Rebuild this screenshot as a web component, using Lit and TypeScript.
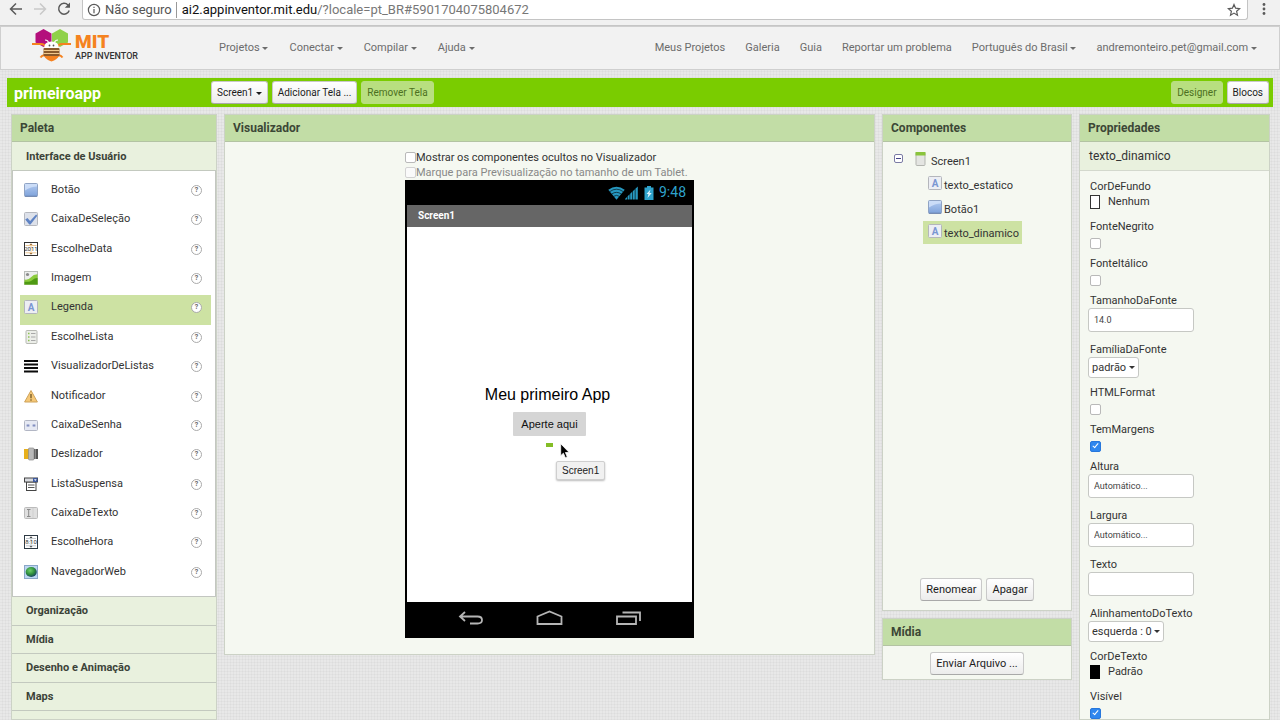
import { LitElement, html, css, TemplateResult } from "lit";
import { customElement, property, state } from "lit/decorators.js";
import { classMap } from "lit/directives/class-map.js";

const icons: Record<string, () => TemplateResult> = {
  button: () => html`<svg class="icon" viewBox="0 0 14 14" aria-hidden="true">
    <defs><linearGradient id="gb" x1="0" y1="0" x2="0" y2="1"><stop offset="0" stop-color="#b4ccf2"/><stop offset="1" stop-color="#7ea2da"/></linearGradient></defs>
    <rect x=".5" y=".5" width="13" height="13" rx="1" fill="url(#gb)" stroke="#8fa3c4"/>
    <path d="M1 1h12v2.500q-6 0-12 4z" fill="#d3e2fa" opacity=".8"/><path d="M1 13.200h12" stroke="#6d85ad"/></svg>`,
  check: () => html`<svg class="icon" viewBox="0 0 14 14" aria-hidden="true">
    <rect x=".5" y=".5" width="13" height="13" rx="1" fill="#dde1ea" stroke="#b5b8bf"/>
    <path d="M1.200 7.600l2.300-1.600 2.600 2.900 6-6.500 1.200 1.300-6.800 8.900h-1.200z" fill="#5f83c4"/></svg>`,
  date: () => html`<svg class="icon" viewBox="0 0 14 14" aria-hidden="true">
    <rect x=".5" y=".5" width="13" height="13" fill="#fff" stroke="#333"/>
    <path d="M1.500 3.500h11M1.500 10.800h11" stroke="#eec996"/><path d="M5.500 3L7 1.300 8.500 3zM5.500 11L7 12.700 8.500 11z" fill="#9a6b35"/>
    <path d="M7 3.500v7.500" stroke="#f3c78e" stroke-width=".8"/>
    <text x="7" y="9.300" text-anchor="middle" font-size="6" font-family="Roboto, sans-serif" fill="#333">2011</text></svg>`,
  image: () => html`<svg class="icon" viewBox="0 0 14 14" aria-hidden="true">
    <rect x=".5" y=".5" width="13" height="13" fill="#eceeed" stroke="#b9bdb9"/>
    <circle cx="3.500" cy="3.500" r="1.600" fill="#8b8b8b"/>
    <path d="M.500 13.500v-5q4 .8 6.500-2.300T13.500 3.200v10.300z" fill="#8ccc3d"/>
    <path d="M.500 13.500v-2.800q6 .3 8-1.800t5-2v6.600z" fill="#4e9a12"/></svg>`,
  label: () => html`<svg class="icon" viewBox="0 0 14 14" aria-hidden="true">
    <rect x=".5" y=".5" width="13" height="13" rx="1" fill="#eceef4" stroke="#b4b6bc"/>
    <text x="7" y="10.800" text-anchor="middle" font-size="10" font-weight="700" font-family="Roboto, sans-serif" fill="#7a96d2">A</text></svg>`,
  list: () => html`<svg class="icon" viewBox="0 0 14 14" aria-hidden="true">
    <rect x="2" y=".5" width="11" height="13" rx="1" fill="#eceee9" stroke="#b7b9b3"/>
    <path d="M4 3.500h1.500M4 7h1.500M4 10.500h1.500" stroke="#8cc152" stroke-width="1.500"/>
    <path d="M7 3.500h4.500M7 7h4.500M7 10.500h4.500" stroke="#a8a8a8"/></svg>`,
  listview: () => html`<svg class="icon" viewBox="0 0 14 14" aria-hidden="true">
    <path d="M0 2h14M0 5.500h14M0 9h14M0 12.500h14" stroke="#0a0a0a" stroke-width="2"/></svg>`,
  warn: () => html`<svg class="icon" viewBox="0 0 14 14" aria-hidden="true">
    <path d="M7 1.500L13.400 13H.6z" fill="#f6c877" stroke="#cda25a" stroke-linejoin="round"/>
    <path d="M7 5v4.200" stroke="#6f5423" stroke-width="1.300"/><circle cx="7" cy="11" r=".8" fill="#6f5423"/></svg>`,
  password: () => html`<svg class="icon" viewBox="0 0 14 14" aria-hidden="true">
    <rect x=".5" y="2.500" width="13" height="10" rx="1" fill="#e6e9f3" stroke="#b2b6c4"/>
    <path d="M2.500 7.500h3M4 6v3M8.500 7.500h3M10 6v3M3 6.500l2 2M5 6.500l-2 2M9 6.500l2 2M11 6.500l-2 2" stroke="#7d8cbe" stroke-width=".8"/></svg>`,
  slider: () => html`<svg class="icon" viewBox="0 0 14 14" aria-hidden="true">
    <path d="M0 2h5v10H0z" fill="#e8b01c"/><path d="M9 2h5v10H9z" fill="#555"/><path d="M11 2h1v10h-1z" fill="#888"/>
    <rect x="4.500" y="1" width="5.500" height="12" rx="1" fill="#b9b9b9" stroke="#8d8d8d" stroke-width=".7"/></svg>`,
  spinner: () => html`<svg class="icon" viewBox="0 0 14 14" aria-hidden="true">
    <rect x="2.500" y="5" width="9.500" height="8.500" fill="#fff" stroke="#444"/>
    <path d="M4 8h6.500M4 10.500h6.500" stroke="#555"/>
    <rect x=".5" y="1" width="13" height="4" fill="#d9dbe0" stroke="#444"/>
    <rect x="9" y="1" width="4.500" height="4" fill="#3f5ba0"/><path d="M10 2.300h2.600L11.300 4z" fill="#fff"/></svg>`,
  textbox: () => html`<svg class="icon" viewBox="0 0 14 14" aria-hidden="true">
    <rect x=".5" y="1.500" width="13" height="11" rx="1" fill="#dfdfdf" stroke="#bbb"/>
    <path d="M3 3.500h3.500M3 10.500h3.500M4.700 3.500v7" stroke="#8a8a8a"/><path d="M9 2v10" stroke="#cfcfcf"/></svg>`,
  time: () => html`<svg class="icon" viewBox="0 0 14 14" aria-hidden="true">
    <rect x=".5" y=".5" width="13" height="13" fill="#fff" stroke="#2e3a44"/>
    <path d="M5.500 3L7 1.300 8.500 3zM5.500 11L7 12.700 8.500 11z" fill="#444"/><path d="M2 3.500h10M2 10.800h10M7 3.500v7.500" stroke="#aab4bc" stroke-width=".7" fill="none"/>
    <text x="7" y="9.300" text-anchor="middle" font-size="6" font-family="Roboto, sans-serif" fill="#333">8:10</text></svg>`,
  web: () => html`<svg class="icon" viewBox="0 0 14 14" aria-hidden="true">
    <defs><radialGradient id="gw" cx=".4" cy=".35" r=".7"><stop offset="0" stop-color="#6fd06a"/><stop offset=".55" stop-color="#2f8f3d"/><stop offset="1" stop-color="#173e6a"/></radialGradient></defs>
    <rect x=".5" y=".5" width="13" height="13" fill="#bcd6f2" stroke="#8aa6c8"/>
    <ellipse cx="7.200" cy="7" rx="5.600" ry="5" fill="url(#gw)"/></svg>`,
  screen: () => html`<svg class="icon" viewBox="0 0 14 14" aria-hidden="true">
    <rect x="1" y=".5" width="9" height="13" rx="1" fill="#e4e5e2" stroke="#b3b5b0"/><path d="M.5 0h10v3.500H.5z" fill="#8ac43c"/></svg>`,
};

const iconCss = css`
  .icon { width: 14px; height: 14px; flex: none; display: block; }
`;

const controlCss = css`
  .btn {
    font: 10px/15px Roboto, sans-serif;
    color: #1c1c1c;
    padding: 3px 5px;
    border: 1px solid #c9c9c9;
    border-bottom-color: #a9a9a9;
    border-radius: 3px;
    background: linear-gradient(#fff, #ececec);
    white-space: nowrap;
  }
  .btn.off { background: #b8df80; border-color: #b8df80; color: #4c7020; }
  .caret {
    display: inline-block;
    border: 3px solid transparent;
    border-top-color: currentColor;
    border-bottom: 0;
    vertical-align: middle;
  }
  .tick {
    appearance: none;
    box-sizing: border-box;
    width: 11px;
    height: 11px;
    margin: 0;
    flex: none;
    display: grid;
    place-items: center;
    border: 1px solid #b9b9b9;
    border-radius: 2px;
    background: #fff;
  }
  .tick:disabled { border-color: #d2d2d2; background: #fafafa; }
  .tick:checked { background: #2f87ee; border-color: #2777dc; }
  .tick:checked::after {
    content: "";
    width: 2px;
    height: 5px;
    margin-bottom: 2px;
    border: solid #fff;
    border-width: 0 1px 1px 0;
    transform: rotate(40deg);
  }
`;

@customElement("ai-panel")
class AiPanel extends LitElement {
  @property() heading = "";
  static styles = css`
    :host { display: flex; flex-direction: column; box-sizing: border-box; border: 1px solid #ccd2c6; background: #f5f8f1; min-width: 0; }
    h2 {
      margin: 0;
      padding: 0 8px;
      font: 700 12px/26px Roboto, sans-serif;
      color: #3c4736;
      background: #c2dda6;
      border-bottom: 1px solid #b3c3a3;
    }
  `;
  render() {
    return html`<h2>${this.heading}</h2><slot></slot>`;
  }
}

@customElement("ai-palette")
class AiPalette extends LitElement {
  @state() selected = "Legenda";
  items: [string, string][] = [
    ["button", "Botão"], ["check", "CaixaDeSeleção"], ["date", "EscolheData"], ["image", "Imagem"],
    ["label", "Legenda"], ["list", "EscolheLista"], ["listview", "VisualizadorDeListas"], ["warn", "Notificador"],
    ["password", "CaixaDeSenha"], ["slider", "Deslizador"], ["spinner", "ListaSuspensa"], ["textbox", "CaixaDeTexto"],
    ["time", "EscolheHora"], ["web", "NavegadorWeb"],
  ];
  static styles = [iconCss, css`
    :host { display: block; flex: 1; background: #e9f1de; font: 11px/18px Roboto, sans-serif; color: #333; }
    .drawer {
      display: block;
      width: 100%;
      padding: 2px 14px 0;
      border: 0;
      border-bottom: 1px solid #c3c9bf;
      background: #e9f1de;
      text-align: left;
      font: 700 11px/26px Roboto, sans-serif;
      color: #3c4338;
    }
    .list {
      list-style: none;
      margin: 0;
      padding: 7px 4px 7px 7px;
      background: #fff;
      border: solid #c3c6c1;
      border-width: 0 1px 1px;
      display: grid;
      grid-auto-rows: 1fr;
      min-height: 411px;
    }
    .item { display: flex; align-items: flex-start; padding: 3px 9px 0 4px; }
    .item.on { background: #cde2a3; }
    .pick { flex: 1; display: flex; gap: 13px; padding: 0; border: 0; background: none; font: inherit; color: inherit; text-align: left; }
    .pick .icon { margin-top: 2px; }
    .help {
      box-sizing: border-box;
      width: 11px;
      height: 11px;
      margin-top: 4px;
      border: 1px solid #aaa;
      border-radius: 50%;
      background: #fff;
      font: 700 7px/9px Roboto, sans-serif;
      color: #666;
      text-align: center;
      text-decoration: none;
    }
    .rest { display: grid; grid-auto-rows: 1fr; min-height: 114px; }
    .rest .drawer { padding-top: 1px; }
  `];
  render() {
    return html`
      <button class="drawer">Interface de Usuário</button>
      <ul class="list">
        ${this.items.map(([icon, name]) => html`
          <li class=${classMap({ item: true, on: name === this.selected })}>
            <button class="pick" @click=${() => (this.selected = name)}>${icons[icon]()}<span>${name}</span></button>
            <a class="help" href="#">?</a>
          </li>`)}
      </ul>
      <div class="rest">
        ${["Organização", "Mídia", "Desenho e Animação", "Maps"].map((n) => html`<button class="drawer">${n}</button>`)}
      </div>`;
  }
}

@customElement("ai-phone")
class AiPhone extends LitElement {
  static styles = css`
    :host { display: block; box-sizing: border-box; border: solid #000; border-width: 0 2px; font-family: Roboto, sans-serif; background: #fff; }
    .status { display: flex; justify-content: flex-end; align-items: center; height: 25px; padding-right: 6px; background: #000; color: #2fa3cc; font-size: 14px; line-height: 25px; }
    .status svg { display: block; height: 14px; }
    .wifi { width: 17px; }
    .signal { width: 13px; margin-right: 6px; }
    .battery { width: 10px; margin-right: 5px; }
    .title { background: #666; color: #fff; font-size: 10px; font-weight: 700; line-height: 20px; padding: 1px 11px; }
    .stage { position: relative; box-sizing: border-box; display: flex; flex-direction: column; align-items: center; justify-content: center; height: 375px; padding-top: 2px; }
    .text { font: 16px/20px "Liberation Sans", sans-serif; color: #000; padding-right: 4px; }
    .push { margin: 7px 0; height: 24px; padding: 0 8px; border: 0; border-radius: 1px; background: #d5d5d5; font: 11px "Liberation Sans", sans-serif; color: #111; }
    .empty { width: 7px; height: 4px; background: #84bd26; }
    .pointer { position: absolute; left: 153px; top: 216px; width: 10px; height: 16px; }
    .tip {
      position: absolute; left: 149px; top: 234px; padding: 0 5px; border: 1px solid #cfcfcf; border-radius: 2px;
      background: #f1f1f1; font: 10px/17px "Liberation Sans", sans-serif; color: #222; box-shadow: 0 1px 2px #0004;
    }
    .keys { box-sizing: border-box; display: flex; justify-content: center; align-items: center; gap: 52px; height: 36px; padding-bottom: 4px; background: #000; }
    .keys button { display: block; border: 0; padding: 0; background: none; }
    .keys svg { display: block; width: 27px; height: 16px; fill: none; stroke: #b5b5b5; stroke-width: 1.800; }
  `;
  render() {
    return html`
      <div class="status">
        <svg class="wifi" viewBox="0 0 17 14" aria-hidden="true">
          <path d="M.300 3.800Q8.500-2.200 16.700 3.800L8.500 13.800z" fill="#2798c0"/>
          <path d="M1.800 5.600q6.700-4.800 13.400 0M3.700 8q4.800-3.300 9.600 0M5.700 10.300q2.800-1.900 5.600 0" fill="none" stroke="#000" stroke-width=".6"/></svg>
        <svg class="signal" viewBox="0 0 13 14" aria-hidden="true"><path d="M0 13.500h2V11L0 13zM2.600 13.500h2V8.300L2.600 10.200zM5.200 13.500h2V5.800L5.200 7.700zM7.800 13.500h2V3.300L7.800 5.200zM10.400 13.500h2.400V.5L10.400 2.700z" fill="#2798c0"/></svg>
        <svg class="battery" viewBox="0 0 10 14" aria-hidden="true"><path d="M3 0h4v1.500h2.500V14H.5V1.500H3z" fill="#2fa3cc"/><path d="M6.500 3.500L2.500 8h2L3.500 12l4.200-5H5.500z" fill="#dff5ff"/></svg>
        <span>9:48</span>
      </div>
      <div class="title">Screen1</div>
      <div class="stage">
        <div class="text">Meu primeiro App</div>
        <button class="push">Aperte aqui</button>
        <div class="empty"></div>
        <svg class="pointer" viewBox="0 0 10 16" aria-hidden="true"><path d="M.7.7v12l2.700-2.500 1.900 4.500 2-.8-1.900-4.400h3.800z" fill="#000" stroke="#fff" stroke-width=".8"/></svg>
        <div class="tip" role="tooltip">Screen1</div>
      </div>
      <div class="keys">
        <button aria-label="Voltar"><svg viewBox="0 0 27 16"><path d="M8 2L3 6.500 8 11M3 6.500h17.500q4.500 0 4.500 3.500t-4.500 3.500H13"/></svg></button>
        <button aria-label="Início"><svg viewBox="0 0 27 16"><path d="M1.500 6.500L13.500 1.500 25.500 6.500V14h-24z"/></svg></button>
        <button aria-label="Recentes"><svg viewBox="0 0 27 16"><path d="M2 6.500h19V14H2zM7.500 2.500H25v8.500"/></svg></button>
      </div>`;
  }
}

type Prop = { id: string; label: string; kind: "color" | "check" | "text" | "select"; value?: string; on?: boolean };

@customElement("ai-properties")
class AiProperties extends LitElement {
  props: Prop[] = [
    { id: "bg", label: "CorDeFundo", kind: "color", value: "Nenhum" },
    { id: "bold", label: "FonteNegrito", kind: "check" },
    { id: "italic", label: "FonteItálico", kind: "check" },
    { id: "size", label: "TamanhoDaFonte", kind: "text", value: "14.0" },
    { id: "family", label: "FamíliaDaFonte", kind: "select", value: "padrão" },
    { id: "html", label: "HTMLFormat", kind: "check" },
    { id: "margins", label: "TemMargens", kind: "check", on: true },
    { id: "height", label: "Altura", kind: "text", value: "Automático..." },
    { id: "width", label: "Largura", kind: "text", value: "Automático..." },
    { id: "text", label: "Texto", kind: "text", value: "" },
    { id: "align", label: "AlinhamentoDoTexto", kind: "select", value: "esquerda : 0" },
    { id: "fg", label: "CorDeTexto", kind: "color", value: "Padrão", on: true },
    { id: "visible", label: "Visível", kind: "check", on: true },
  ];
  static styles = [controlCss, css`
    :host { display: block; font: 11px/14px Roboto, sans-serif; color: #333; }
    .name { padding: 0 9px; font-size: 12px; line-height: 28px; background: #e9f1de; border-bottom: 1px solid #d3d8cd; }
    .form { padding: 9px 8px; }
    .prop { display: flex; flex-direction: column; align-items: flex-start; }
    .prop label { padding-left: 2px; }
    .prop.color { margin-bottom: 10px; }
    .prop.check { margin-bottom: 5px; }
    .prop.text { margin-bottom: 11px; }
    .prop.select { margin-bottom: 8px; }
    .cell { display: flex; align-items: center; height: 18px; padding-left: 2px; }
    .swatch { display: flex; align-items: center; gap: 8px; height: 16px; padding: 0 0 0 2px; border: 0; background: none; font: inherit; color: inherit; }
    .swatch i { box-sizing: border-box; width: 10px; height: 14px; border: 1px solid #333; background: #fff; }
    .swatch.on i { background: #000; border-color: #000; }
    .field { box-sizing: border-box; width: 106px; height: 24px; padding: 0 5px; border: 1px solid #c6c8c4; border-radius: 3px; background: #fff; font: 9px Roboto, sans-serif; color: #444; }
    .pickbox { display: grid; align-items: center; height: 21px; }
    .pickbox select {
      grid-area: 1 / 1; appearance: none; height: 21px; padding: 0 11px 0 3px; border: 1px solid #c6c8c4; border-radius: 3px;
      background: #fff; font: 11px Roboto, sans-serif; color: #333;
    }
    .pickbox .caret { grid-area: 1 / 1; justify-self: end; margin-right: 4px; pointer-events: none; }
  `];
  control(p: Prop) {
    switch (p.kind) {
      case "color":
        return html`<button id=${p.id} class=${classMap({ swatch: true, on: !!p.on })}><i></i>${p.value}</button>`;
      case "check":
        return html`<span class="cell"><input id=${p.id} class="tick" type="checkbox" .checked=${!!p.on} /></span>`;
      case "text":
        return html`<input id=${p.id} class="field" type="text" .value=${p.value ?? ""} />`;
      default:
        return html`<span class="pickbox"><select id=${p.id}><option>${p.value}</option></select><span class="caret"></span></span>`;
    }
  }
  render() {
    return html`
      <div class="name">texto_dinamico</div>
      <div class="form">
        ${this.props.map((p) => html`<div class="prop ${p.kind}"><label for=${p.id}>${p.label}</label>${this.control(p)}</div>`)}
      </div>`;
  }
}

@customElement("app-root")
class AppRoot extends LitElement {
  static styles = [iconCss, controlCss, css`
    :host {
      display: flex;
      flex-direction: column;
      height: 100vh;
      overflow: hidden;
      font: 11px/16px Roboto, sans-serif;
      color: #333;
      background-color: #e8e8e8;
      background-image:
        repeating-linear-gradient(90deg, #0000 0 2px, #00000007 2px 3px),
        repeating-linear-gradient(#0000 0 2px, #00000007 2px 3px);
    }
    .browser { display: flex; align-items: flex-start; height: 25px; padding: 0 8px; background: #f1f1f1; border-bottom: 1px solid #c6c6c6; flex: none; }
    .browser > button { border: 0; background: none; padding: 1px 0 0; margin-right: 8px; }
    .browser svg { display: block; width: 16px; height: 16px; fill: none; stroke: #5a5a5a; stroke-width: 1.500; }
    .browser .pale svg { stroke: #c9c9c9; }
    .url { flex: 1; display: flex; align-items: center; height: 20px; margin-left: 2px; padding: 0 4px; background: #fff; border: 1px solid #c4c4c4; border-top: 0; border-radius: 0 0 3px 3px; font-size: 13px; color: #555; line-height: 18px; white-space: pre; box-sizing: border-box; }
    .url svg { width: 14px; height: 14px; margin-right: 4px; stroke-width: 1.200; }
    .url .site { border-left: 1px solid #999; margin-left: 4px; padding-left: 5px; line-height: 16px; flex: 1; color: #777; }
    .url b { font-weight: 400; color: #111; }
    .url .star { border: 0; padding: 0; background: none; }
    .url .star svg { margin: 0 2px 0 0; }
    .browser > .more { margin: 0 0 0 8px; }
    .browser .more svg { fill: #5a5a5a; stroke: none; }

    .top { display: flex; align-items: center; height: 42px; padding: 0 22px 0 31px; background: #f2f2f2; border: 1px solid #cfcfcf; flex: none; }
    .brand { display: flex; gap: 4px; width: 187px; margin-bottom: 5px; color: inherit; text-decoration: none; }
    .brand svg { width: 39px; height: 33px; }
    .brand p { margin: 0; font: 900 19px/19px Roboto, sans-serif; color: #f58220; padding-top: 3px; }
    .brand small { display: block; font: 500 9px/11px Roboto, sans-serif; color: #333; white-space: nowrap; }
    .menu { display: flex; gap: 21px; }
    .menu a { color: #6c6c6c; text-decoration: none; white-space: nowrap; }
    .menu.end { margin-left: auto; gap: 20px; }

    .bar { display: flex; align-items: flex-start; gap: 4px; height: 26px; margin: 8px 7px 7px; padding: 3px 4px 0 7px; background: #7acc00; flex: none; }
    .bar h1 { margin: 0; width: 193px; font: 700 16px/26px Roboto, sans-serif; color: #fff; }
    .bar .space { flex: 1; }

    main { flex: 1; min-height: 0; display: grid; grid-template-columns: 206px minmax(0, 1fr) 190px 191px; grid-template-rows: minmax(0, 1fr); gap: 7px; padding: 0 10px 0 11px; }
    .tall { overflow: hidden; }
    .mid { align-self: start; }
    .view { align-self: center; width: 289px; padding: 8px 0 16px; }
    .opt { display: flex; align-items: center; line-height: 15px; white-space: nowrap; }
    .opt.dim { color: #888; }

    .side { display: flex; flex-direction: column; gap: 7px; }
    .tree { min-height: 436px; padding: 7px 11px 0; box-sizing: border-box; }
    .node { display: flex; align-items: flex-start; gap: 2px; height: 23px; margin-bottom: 1px; padding: 0 3px 0 5px; width: max-content; line-height: 25px; }
    .node .icon { margin-top: 3px; }
    .node.root { padding-left: 0; }
    .node.child { margin-left: 29px; }
    .node.on { background: #cde2a3; }
    .fold { box-sizing: border-box; width: 9px; height: 9px; margin: 5px 10px 0 0; padding: 0; border: 1px solid #7b7ba5; border-radius: 2px; background: linear-gradient(#448, #448) center / 5px 1px no-repeat #fff; }
    .acts { display: flex; justify-content: center; gap: 4px; padding-bottom: 9px; }
    .acts .btn { font-size: 11px; }
    .acts.upload { padding: 6px 0 4px; }
  `];
  menuLink(text: string, drop = false) {
    return html`<a href="#">${text}${drop ? html` <span class="caret"></span>` : ""}</a>`;
  }
  render() {
    return html`
      <div class="browser">
        <button aria-label="Voltar"><svg viewBox="0 0 16 16"><path d="M14 8H3M8 2.500L2.500 8 8 13.500"/></svg></button>
        <button class="pale" aria-label="Avançar"><svg viewBox="0 0 16 16"><path d="M2 8h11M8 2.500L13.500 8 8 13.500"/></svg></button>
        <button aria-label="Recarregar"><svg viewBox="0 0 16 16"><path d="M13.200 9.500A5.400 5.400 0 1 1 12 4"/><path d="M14 1.500V6.800H8.800z" fill="#5a5a5a" stroke="none"/></svg></button>
        <div class="url">
          <svg viewBox="0 0 14 14" aria-hidden="true"><circle cx="7" cy="7" r="5.600"/><path d="M7 6v4.200M7 3.700v1.400"/></svg><span>Não seguro</span>
          <span class="site"><b>ai2.appinventor.mit.edu</b>/?locale=pt_BR#5901704075804672</span>
          <button class="star" aria-label="Favoritar"><svg viewBox="0 0 14 14"><path d="M7 1.500l1.600 3.700 4 .4-3 2.700.9 3.900L7 10.100l-3.500 2.100.9-3.900-3-2.700 4-.4z"/></svg></button>
        </div>
        <button class="more" aria-label="Mais"><svg viewBox="0 0 16 16"><circle cx="8" cy="3.500" r="1.400"/><circle cx="8" cy="8" r="1.400"/><circle cx="8" cy="12.500" r="1.400"/></svg></button>
      </div>

      <header class="top">
        <a class="brand" href="#">
          <svg viewBox="0 0 39 33" aria-hidden="true">
            <path d="M11.500 0l8 4.400v9l-8 4.700-8-4.700v-9z" fill="#b4107c"/>
            <path d="M28 0l8 4.400v9l-8 4.700-8-4.700v-9z" fill="#8fd14a"/>
            <path d="M0 15h9q4 0 5 4h11q1-4 5-4h9" stroke="#f58220" stroke-width="2.200" fill="none"/>
            <path d="M8.500 28.500q2-3 5-2M30.500 28.500q-2-3-5-2" stroke="#f58220" stroke-width="2" fill="none"/>
            <path d="M12 19.500q0-7 7.500-7t7.500 7z" fill="#fff"/>
            <path d="M16.500 13.500q-.5-2.500-3.500-2.500M22.500 13.500q.5-2.500 3.500-2.500" stroke="#fff" stroke-width="1.200" fill="none"/>
            <circle cx="17.500" cy="16.500" r=".9" fill="#555"/><circle cx="21.500" cy="16.500" r=".9" fill="#555"/>
            <rect x="11.500" y="19" width="16" height="8" rx="1" fill="#8a5a2c"/><path d="M11.500 21.500h16M11.500 24.500h16" stroke="#f3c98b" stroke-width="1.100"/>
            <path d="M12 27h15q-2 3.500-7.500 5.500Q14 30.500 12 27z" fill="#f58220"/>
          </svg>
          <p>MIT<small>APP INVENTOR</small></p>
        </a>
        <nav class="menu">${["Projetos", "Conectar", "Compilar", "Ajuda"].map((t) => this.menuLink(t, true))}</nav>
        <nav class="menu end">
          ${["Meus Projetos", "Galeria", "Guia", "Reportar um problema"].map((t) => this.menuLink(t))}
          ${["Português do Brasil", "andremonteiro.pet@gmail.com"].map((t) => this.menuLink(t, true))}
        </nav>
      </header>

      <div class="bar">
        <h1>primeiroapp</h1>
        <button class="btn">Screen1 <span class="caret"></span></button>
        <button class="btn">Adicionar Tela ...</button>
        <button class="btn off">Remover Tela</button>
        <span class="space"></span>
        <button class="btn off">Designer</button>
        <button class="btn">Blocos</button>
      </div>

      <main>
        <ai-panel class="tall" heading="Paleta"><ai-palette></ai-palette></ai-panel>

        <ai-panel class="mid" heading="Visualizador">
          <div class="view">
            <label class="opt"><input class="tick" type="checkbox" />Mostrar os componentes ocultos no Visualizador</label>
            <label class="opt dim"><input class="tick" type="checkbox" disabled />Marque para Previsualização no tamanho de um Tablet.</label>
            <ai-phone></ai-phone>
          </div>
        </ai-panel>

        <div class="side">
          <ai-panel heading="Componentes">
            <div class="tree">
              <div class="node root"><button class="fold" aria-label="Recolher"></button>${icons.screen()}Screen1</div>
              <div class="node child">${icons.label()}texto_estatico</div>
              <div class="node child">${icons.button()}Botão1</div>
              <div class="node child on">${icons.label()}texto_dinamico</div>
            </div>
            <div class="acts"><button class="btn">Renomear</button><button class="btn">Apagar</button></div>
          </ai-panel>
          <ai-panel heading="Mídia">
            <div class="acts upload"><button class="btn">Enviar Arquivo ...</button></div>
          </ai-panel>
        </div>

        <ai-panel class="tall" heading="Propriedades"><ai-properties></ai-properties></ai-panel>
      </main>`;
  }
}
